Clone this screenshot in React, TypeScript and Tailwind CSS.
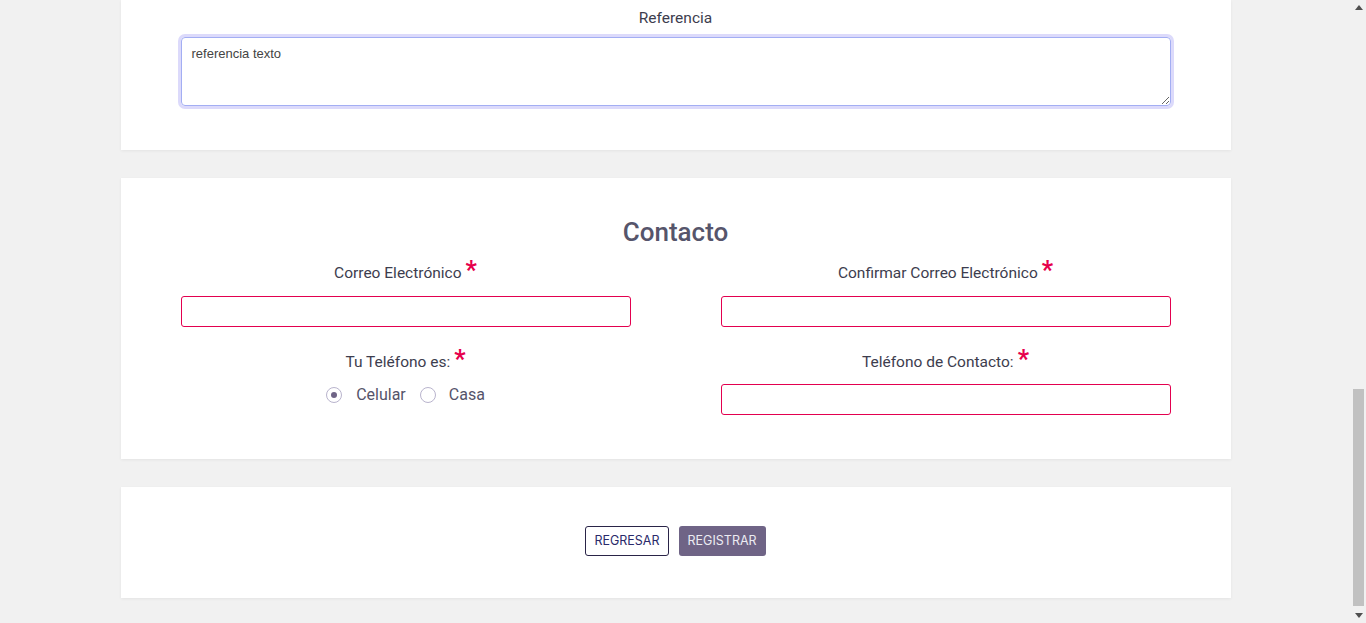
const Required = () => (
  <span className="ml-1 relative top-[1px] text-[25px] font-bold leading-[0px] text-[#e6004c] font-['Roboto']">*</span>
);

function Label({ text }: { text: string }) {
  return (
    <label className="block text-center text-[15.5px] leading-6 text-[#3d3d4e]">
      {text}
      <Required />
    </label>
  );
}

function Input() {
  return (
    <input
      type="text"
      className="block w-full h-[31px] rounded-[3px] border border-[#e3004f] bg-white px-2 outline-none"
    />
  );
}

function Scrollbar() {
  return (
    <div className="w-[15px] h-full bg-[#f1f1f1] flex flex-col items-center">
      <div className="h-[15px] flex items-center justify-center">
        <svg width="8" height="5" viewBox="0 0 8 5">
          <path d="M0 5 L4 0 L8 5 Z" fill="#505050" />
        </svg>
      </div>
      <div className="flex-1 w-full flex flex-col justify-end px-[2px] pb-[2px]">
        <div className="h-[217px] w-full bg-[#c1c1c1]" />
      </div>
      <div className="h-[15px] flex items-center justify-center">
        <svg width="8" height="5" viewBox="0 0 8 5">
          <path d="M0 0 L8 0 L4 5 Z" fill="#505050" />
        </svg>
      </div>
    </div>
  );
}

export default function App() {
  return (
    <div className="h-[623px] flex bg-[#f1f1f1] font-['Roboto'] overflow-hidden">
      <div className="flex-1 pb-[25px]">
        <div className="w-[1110px] mx-auto flex flex-col gap-7">
          <div className="bg-white shadow-[0_1px_3px_rgba(0,0,0,0.06)] px-[60px] pt-[6px] pb-[44px]">
            <label className="block text-center text-[15.5px] leading-6 text-[#3d3d4e] mb-[7px]">
              Referencia
            </label>
            <textarea
              defaultValue="referencia texto"
              className="block w-full h-[69px] rounded-[4px] border border-[#a3aef3] shadow-[0_0_0_3px_#dcdafb] px-[10px] py-[6px] text-[13px] text-[#444] font-['Liberation_Sans'] outline-none resize-y"
            />
          </div>

          <div className="bg-white shadow-[0_1px_3px_rgba(0,0,0,0.06)] px-[60px] pt-[38px] pb-[44px]">
            <h2 className="text-center text-[26px] leading-[32px] font-medium text-[#56556b] mb-[13px]">
              Contacto
            </h2>
            <div className="grid grid-cols-2 gap-x-[90px]">
              <div>
                <div className="mb-[11px]">
                  <Label text="Correo Electrónico" />
                </div>
                <Input />
              </div>
              <div>
                <div className="mb-[11px]">
                  <Label text="Confirmar Correo Electrónico" />
                </div>
                <Input />
              </div>
              <div className="mt-[23px]">
                <div className="mb-[9px]">
                  <Label text="Tu Teléfono es:" />
                </div>
                <div className="flex items-center justify-center gap-[14px] text-[16px] text-[#55546a]">
                  <span className="flex items-center gap-[14px]">
                    <span className="w-4 h-4 rounded-full border border-[#b9b4cd] flex items-center justify-center">
                      <span className="w-[6px] h-[6px] rounded-full bg-[#6f6486]" />
                    </span>
                    Celular
                  </span>
                  <span className="flex items-center gap-[13px]">
                    <span className="w-4 h-4 rounded-full border border-[#b9b4cd]" />
                    Casa
                  </span>
                </div>
              </div>
              <div className="mt-[23px]">
                <div className="mb-[10px]">
                  <Label text="Teléfono de Contacto:" />
                </div>
                <Input />
              </div>
            </div>
          </div>

          <div className="bg-white shadow-[0_1px_3px_rgba(0,0,0,0.06)] pt-[39px] pb-[42px] flex justify-center gap-[10px]">
            <button className="h-[30px] px-[8px] rounded-[3px] border border-[#2a2448] bg-white text-[12.5px] text-[#2a2a6a] font-['Inter']">
              REGRESAR
            </button>
            <button className="h-[30px] px-[9px] rounded-[3px] bg-[#6f6486] text-[12.5px] text-[#ecebf2] font-['Inter']">
              REGISTRAR
            </button>
          </div>
        </div>
      </div>
      <Scrollbar />
    </div>
  );
}
